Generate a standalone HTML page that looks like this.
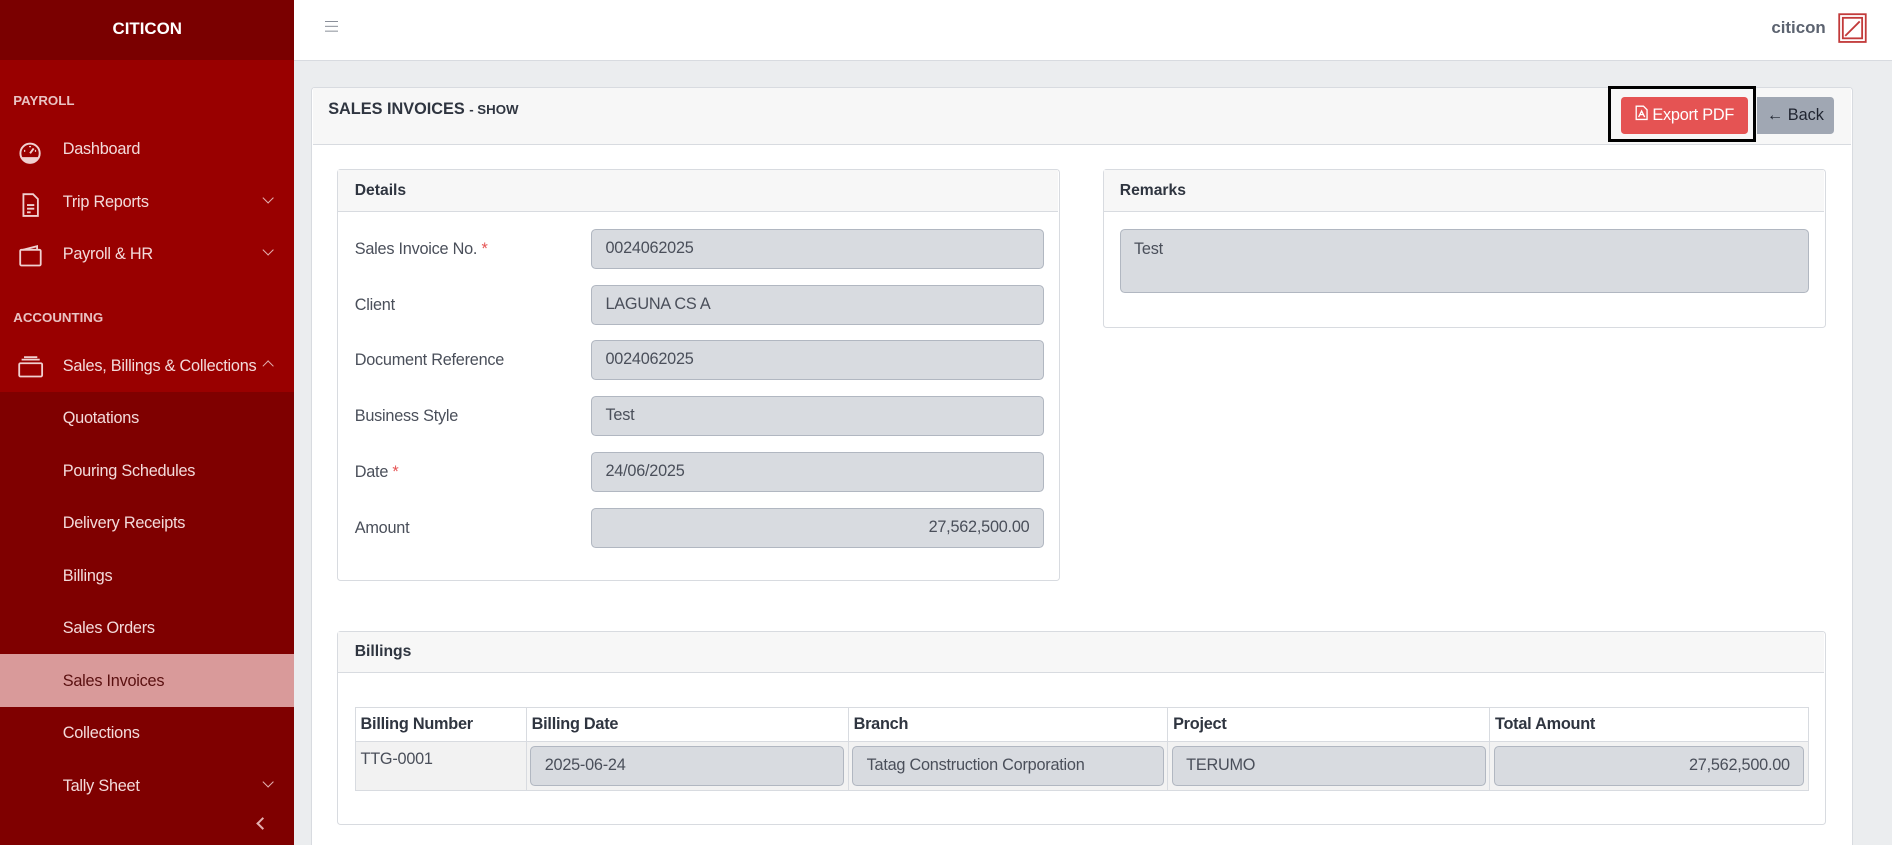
<!DOCTYPE html>
<html><head><meta charset="utf-8"><style>
html{margin:0;padding:0;height:845px;overflow:hidden}
body{margin:0;padding:0;width:1568px;height:700px;zoom:1.20663;overflow:hidden;font-family:"Liberation Sans",sans-serif;font-size:13px;color:#3c4250;background:#ebedef;position:relative}
.abs{position:absolute}
.sb{left:0;top:0;width:244px;height:700px;background:#990000}
.sbh{left:0;top:0;width:244px;height:50px;background:#7a0000;color:#fff;font-weight:bold;font-size:14px;text-align:center;line-height:48px}
.sub{left:0;top:325px;width:244px;height:375px;background:#7f0000}
.sec{left:11px;color:#e9c2c2;font-weight:bold;font-size:11px}
.it{left:52px;color:#f3dada;font-size:13.5px;letter-spacing:-0.2px}
.chev{left:219px;width:6px;height:6px;border-right:1px solid #e3b0b0;border-bottom:1px solid #e3b0b0;transform:rotate(45deg)}
.top{left:244px;top:0;width:1324px;height:50px;background:#fff;border-bottom:1px solid #d8dbe0}
.card{background:#fff;border:1px solid #d8dbe0;border-radius:3px}
.ch{background:#f7f7f7;border-bottom:1px solid #d8dbe0}
.lbl{left:294px;font-size:13.5px;color:#4a4f5a;letter-spacing:-0.2px}
.inp{background:#d8dbe0;border:1px solid #b1b7c1;border-radius:4px;box-sizing:border-box;font-size:13.5px;color:#4a4f5a;padding:0 11px;line-height:31px;letter-spacing:-0.2px}
.req{color:#e55353}
th,td{border:1px solid #d8dbe0;text-align:left;font-size:13.5px;letter-spacing:-0.2px}
</style></head><body>
<div class="abs sb"></div>
<div class="abs sub"></div>
<div class="abs sbh">CITICON</div>
<div class="abs sec" style="top:77px">PAYROLL</div>
<div class="abs sec" style="top:257px">ACCOUNTING</div>
<svg class="abs" style="left:15px;top:116px" width="20" height="20" viewBox="0 0 20 20" fill="none" stroke="#f0d0d0" stroke-width="1.6"><circle cx="10" cy="11" r="8"/><path d="M10 11l3-4M5 9h1M14 9h1M10 5v1"/><path d="M3.5 15a8 8 0 0 0 13 0z" fill="#f0d0d0"/></svg>
<div class="abs it" style="top:116px">Dashboard</div>
<svg class="abs" style="left:17px;top:160px" width="16" height="20" viewBox="0 0 16 20" fill="none" stroke="#f0d0d0" stroke-width="1.5"><path d="M2 1h8l4 4v14H2z"/><path d="M5 10h6M5 13h6M5 16h3"/></svg>
<div class="abs it" style="top:160px">Trip Reports</div><div class="abs chev" style="top:161px"></div>
<svg class="abs" style="left:16px;top:203px" width="20" height="18" viewBox="0 0 20 18" fill="none" stroke="#f0d0d0" stroke-width="1.5"><rect x="1" y="4" width="17" height="13" rx="1"/><path d="M3 4l12-3v3"/></svg>
<div class="abs it" style="top:203px">Payroll &amp; HR</div><div class="abs chev" style="top:204px"></div>
<svg class="abs" style="left:15px;top:295px" width="22" height="18" viewBox="0 0 22 18" fill="none" stroke="#f0d0d0" stroke-width="1.5"><rect x="1" y="6" width="19" height="11" rx="1"/><path d="M3 3h15M5 1h11"/></svg>
<div class="abs it" style="top:296px">Sales, Billings &amp; Collections</div>
<div class="abs" style="left:219px;top:300px;width:6px;height:6px;border-left:1px solid #e3b0b0;border-top:1px solid #e3b0b0;transform:rotate(45deg)"></div>
<div class="abs it" style="top:339px">Quotations</div>
<div class="abs it" style="top:383px">Pouring Schedules</div>
<div class="abs it" style="top:426px">Delivery Receipts</div>
<div class="abs it" style="top:470px">Billings</div>
<div class="abs it" style="top:513px">Sales Orders</div>
<div class="abs" style="left:0;top:542px;width:244px;height:44px;background:#d99a9a"></div>
<div class="abs it" style="top:557px;color:#5a1010">Sales Invoices</div>
<div class="abs it" style="top:600px">Collections</div>
<div class="abs it" style="top:644px">Tally Sheet</div><div class="abs chev" style="top:645px"></div>
<div class="abs" style="left:214px;top:679px;width:6px;height:6px;border-left:2px solid #e3b0b0;border-bottom:2px solid #e3b0b0;transform:rotate(45deg)"></div>

<div class="abs top"></div>
<div class="abs" style="left:269px;top:17px;width:11px;height:1px;background:#8a8f99;box-shadow:0 4px 0 #8a8f99,0 8px 0 #8a8f99"></div>
<div class="abs" style="left:1468px;top:15px;font-weight:bold;font-size:14px;color:#5c6370">citicon</div>
<svg class="abs" style="left:1523px;top:11px" width="24" height="25" viewBox="0 0 24 25" fill="none" stroke="#c23a3a" stroke-width="1.5"><rect x="1" y="1" width="22" height="23"/><rect x="4" y="4" width="16" height="17"/><path d="M6 19L18 7"/></svg>

<div class="abs card" style="left:258px;top:72px;width:1276px;height:640px"></div>
<div class="abs ch" style="left:259px;top:73px;width:1275px;height:46px"></div>
<div class="abs" style="left:272px;top:83px;font-weight:bold;font-size:13.5px;color:#2f3540">SALES INVOICES <span style="font-size:11px">- SHOW</span></div>
<div class="abs" style="left:1333px;top:71px;width:117px;height:42px;border:3px solid #000"></div>
<div class="abs" style="left:1343px;top:80px;width:106px;height:31px;background:#e55353;border-radius:3px;color:#fff;font-size:13.5px;line-height:31px;text-align:center;letter-spacing:-0.2px"><svg width="11" height="13" viewBox="0 0 11 13" fill="none" stroke="#fff" stroke-width="1.1" style="vertical-align:-1px"><path d="M1 1h6l3 3v8H1z"/><path d="M3 10l2.5-5L8 10M4 8h3"/></svg> Export PDF</div>
<div class="abs" style="left:1456px;top:80px;width:64px;height:31px;background:#a0a7b3;border-radius:0 3px 3px 0;color:#1f2430;font-size:13.5px;line-height:31px;text-align:center">← Back</div>

<div class="abs card" style="left:279px;top:140px;width:598px;height:340px"></div>
<div class="abs ch" style="left:280px;top:141px;width:597px;height:34px"></div>
<div class="abs" style="left:294px;top:151px;font-weight:bold;color:#2f3540">Details</div>
<div class="abs lbl" style="top:199px">Sales Invoice No. <span class="req">*</span></div>
<div class="abs lbl" style="top:245px">Client</div>
<div class="abs lbl" style="top:291px">Document Reference</div>
<div class="abs lbl" style="top:337px">Business Style</div>
<div class="abs lbl" style="top:384px">Date <span class="req">*</span></div>
<div class="abs lbl" style="top:430px">Amount</div>
<div class="abs inp" style="left:490px;top:190px;width:375px;height:33px">0024062025</div>
<div class="abs inp" style="left:490px;top:236px;width:375px;height:33px">LAGUNA CS A</div>
<div class="abs inp" style="left:490px;top:282px;width:375px;height:33px">0024062025</div>
<div class="abs inp" style="left:490px;top:328px;width:375px;height:33px">Test</div>
<div class="abs inp" style="left:490px;top:375px;width:375px;height:33px">24/06/2025</div>
<div class="abs inp" style="left:490px;top:421px;width:375px;height:33px;text-align:right">27,562,500.00</div>

<div class="abs card" style="left:914px;top:140px;width:598px;height:130px"></div>
<div class="abs ch" style="left:915px;top:141px;width:597px;height:34px"></div>
<div class="abs" style="left:928px;top:151px;font-weight:bold;color:#2f3540">Remarks</div>
<div class="abs inp" style="left:928px;top:190px;width:571px;height:53px;line-height:33px">Test</div>

<div class="abs card" style="left:279px;top:523px;width:1233px;height:159px"></div>
<div class="abs ch" style="left:280px;top:524px;width:1232px;height:33px"></div>
<div class="abs" style="left:294px;top:533px;font-weight:bold;color:#2f3540">Billings</div>
<table class="abs" style="left:294px;top:586px;width:1205px;border-collapse:collapse;table-layout:fixed">
<tr style="height:28px;color:#2f3540"><th style="width:133px;padding:0 4px">Billing Number</th><th style="width:258px;padding:0 4px">Billing Date</th><th style="width:256px;padding:0 4px">Branch</th><th style="width:258px;padding:0 4px">Project</th><th style="padding:0 4px">Total Amount</th></tr>
<tr style="height:41px;background:#f2f2f2"><td style="vertical-align:top;padding:7px 4px;color:#4a4f5a">TTG-0001</td>
<td style="padding:3px"><div class="inp">2025-06-24</div></td>
<td style="padding:3px"><div class="inp">Tatag Construction Corporation</div></td>
<td style="padding:3px"><div class="inp">TERUMO</div></td>
<td style="padding:3px"><div class="inp" style="text-align:right">27,562,500.00</div></td></tr>
</table>
</body></html>
